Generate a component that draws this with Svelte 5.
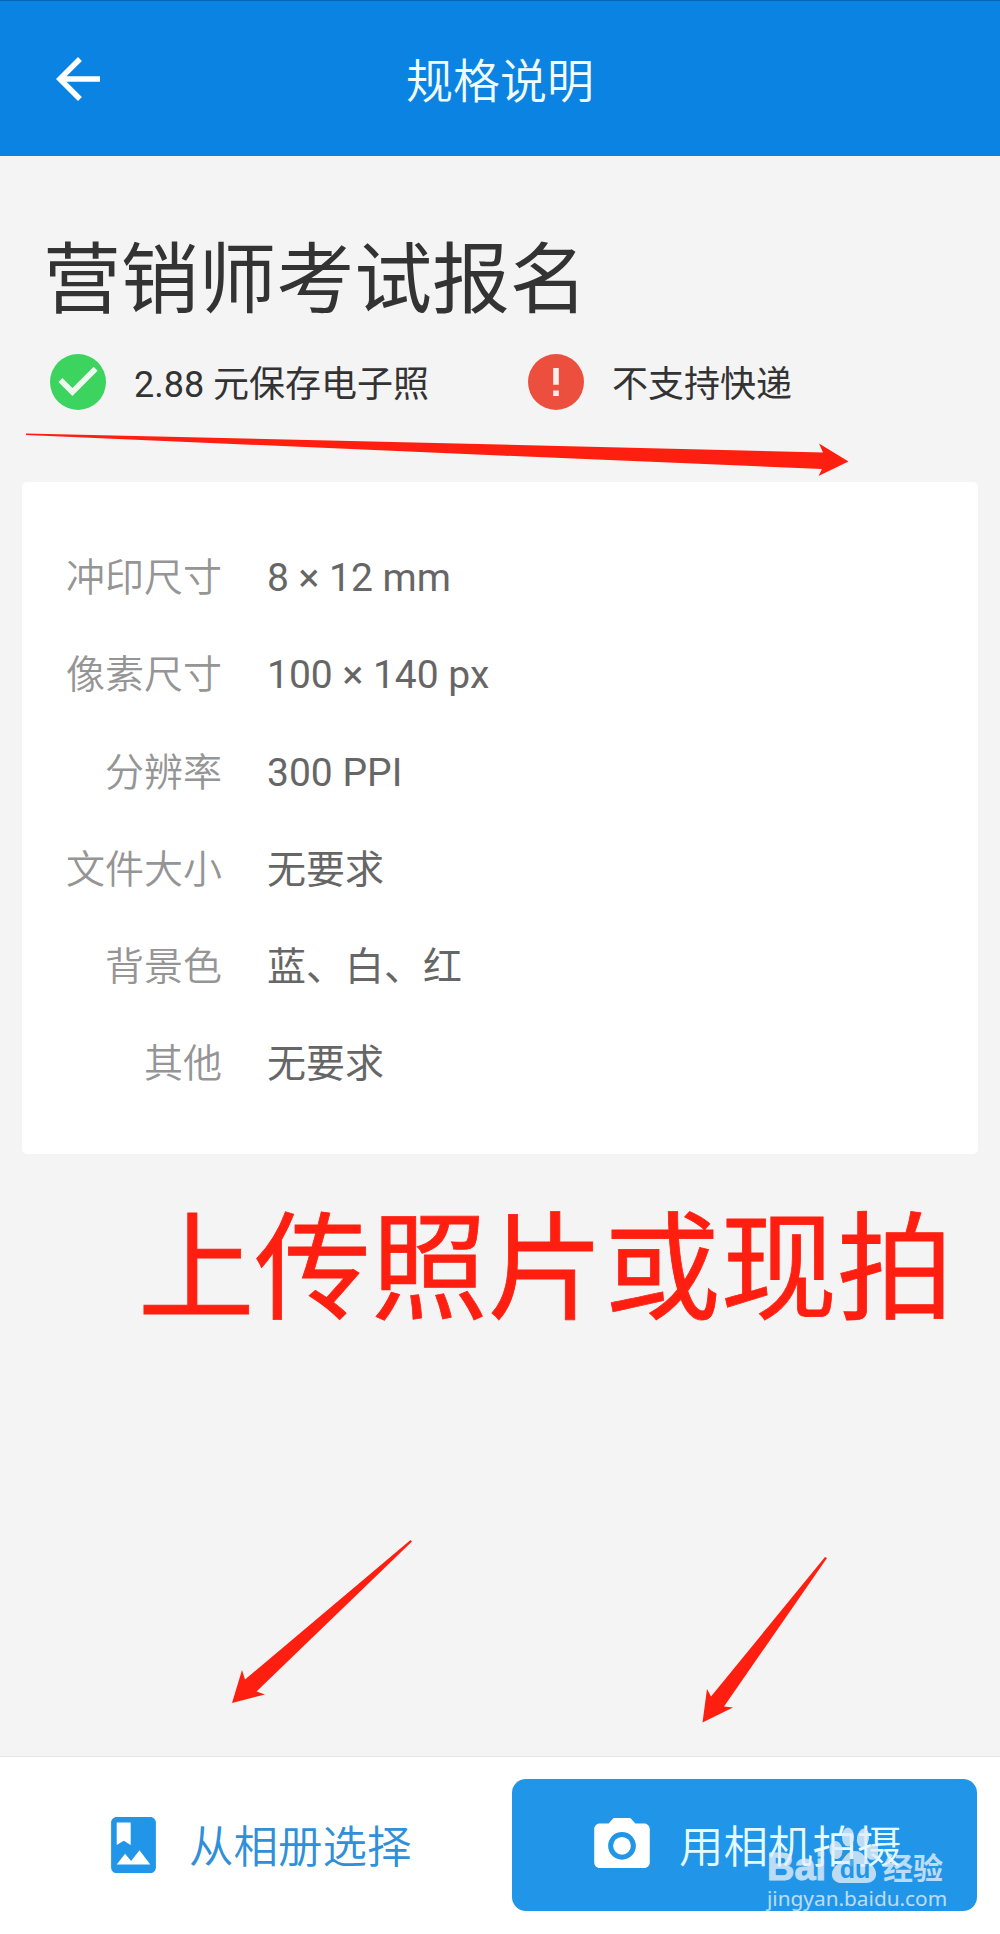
<script lang="ts">
  const title = "规格说明";
  const name = "营销师考试报名";

  const specs = [
    { label: "冲印尺寸", value: "8 × 12 mm" },
    { label: "像素尺寸", value: "100 × 140 px" },
    { label: "分辨率", value: "300 PPI" },
    { label: "文件大小", value: "无要求" },
    { label: "背景色", value: "蓝、白、红" },
    { label: "其他", value: "无要求" },
  ];
</script>

<main>
  <header>
    <button class="back" aria-label="返回">
      <svg viewBox="0 0 24 24">
        <path d="M20 11H7.83l5.59-5.59L12 4l-8 8 8 8 1.41-1.41L7.83 13H20v-2z" />
      </svg>
    </button>
    <span class="title">{title}</span>
  </header>

  <section class="intro">
    <h1>{name}</h1>
    <div class="status">
      <div class="item">
        <svg viewBox="2 2 20 20">
          <circle cx="12" cy="12" r="10" fill="#3dd35f" />
          <path d="M10 17l-5-5 1.41-1.41L10 14.17l7.59-7.59L19 8l-9 9z" fill="#eefaf0" />
        </svg>
        <span>2.88 元保存电子照</span>
      </div>
      <div class="item">
        <svg viewBox="2 2 20 20">
          <circle cx="12" cy="12" r="10" fill="#ed4f3f" />
          <path d="M11 7h2v6h-2zM11 15h2v2h-2z" fill="#fdeeec" />
        </svg>
        <span>不支持快递</span>
      </div>
    </div>
  </section>

  <dl class="card">
    {#each specs as spec}
      <div class="row">
        <dt>{spec.label}</dt>
        <dd>{spec.value}</dd>
      </div>
    {/each}
  </dl>

  <p class="note">上传照片或现拍</p>

  <footer>
    <button class="album">
      <svg class="album-icon" viewBox="4 2 16 20">
        <path
          d="M18 2H6c-1.1 0-2 .9-2 2v16c0 1.1.9 2 2 2h12c1.1 0 2-.9 2-2V4c0-1.1-.9-2-2-2zM6 4h5v8l-2.5-1.5L6 12V4zM6 19l3-3.86 2.14 2.58 3-3.86L18 19H6z"
        />
      </svg>
      <span>从相册选择</span>
    </button>
    <button class="camera">
      <svg class="camera-icon" viewBox="2 2 20 18">
        <circle cx="12" cy="12" r="3.2" />
        <path
          d="M9 2L7.17 4H4c-1.1 0-2 .9-2 2v12c0 1.1.9 2 2 2h16c1.1 0 2-.9 2-2V6c0-1.1-.9-2-2-2h-3.17L15 2H9zm3 15c-2.76 0-5-2.24-5-5s2.24-5 5-5 5 2.24 5 5-2.24 5-5 5z"
        />
      </svg>
      <span>用相机拍摄</span>
    </button>
  </footer>

  <!-- Hand drawn arrows, over the whole page. -->
  <svg class="marks" viewBox="0 0 1000 1934">
    <path d="M26 433.5L500 444.500 823 452.500 819 443.500 848.500 461.500 818.500 476 822 469 500 455.500 26 435z" />
    <path d="M410.500 1540L412 1541.500 256.500 1691.500 265 1694.500 232 1703 242 1670 245 1679.500z" />
    <path d="M825 1557L827 1558 724 1706.500 733 1707.500 702.500 1722.500 707 1689 711 1696.500z" />
  </svg>

  <div class="watermark">
    <div class="brand">
      <span class="bai">Bai</span>
      <svg viewBox="0 0 50 57">
        <ellipse cx="8" cy="23" rx="6.500" ry="9" transform="rotate(-8 8 23)" />
        <ellipse cx="20" cy="10" rx="6" ry="9.500" />
        <ellipse cx="35" cy="11" rx="6" ry="9.500" transform="rotate(10 35 11)" />
        <ellipse cx="45" cy="25" rx="7" ry="8" transform="rotate(25 45 25)" />
        <path d="M27 24C18 24 18 31 10 37C0 44 3 56 14 56H38C49 56 51 45 44 38C36 31 36 24 27 24z" />
        <text x="27" y="51" text-anchor="middle">du</text>
      </svg>
      <span class="exp">经验</span>
    </div>
    <span class="url">jingyan.baidu.com</span>
  </div>
</main>

<style>
  :global(body) {
    background-color: #f4f4f4;
  }

  main {
    position: relative;
    box-sizing: border-box;
    width: 1000px;
    height: 1934px;
    overflow: hidden;

    display: flex;
    flex-direction: column;

    font-family: Roboto, "Noto Sans CJK SC", sans-serif;
    background-color: #f4f4f4;
  }

  button {
    border: 0;
    padding: 0;
    font: inherit;
    background: none;
  }

  svg {
    display: block;
    flex: none;
  }

  header {
    box-sizing: border-box;
    height: 156px;
    padding: 0 45px;

    display: grid;
    grid-template-columns: 66px 1fr 66px;
    align-items: center;

    color: #f0fcff;
    background-color: #0b83e3;
    border-top: 1px solid #0765b4;
  }

  .back svg {
    width: 66px;
    height: 66px;
    fill: #fff;
  }

  .title {
    font-size: 47px;
    font-weight: 350;
    line-height: 60px;
    text-align: center;
    padding-top: 6px;
  }

  .intro {
    height: 326px;
    padding-left: 43px;
    color: #333;
  }

  h1 {
    margin: 0;
    padding-top: 73px;

    font-size: 77.8px;
    font-weight: 400;
    line-height: 104px;
  }

  .status {
    display: grid;
    grid-template-columns: 478px 1fr;
    padding: 21px 0 0 7px;
  }

  .item {
    display: flex;
    align-items: center;
    gap: 28px;

    font-size: 36px;
    line-height: 50px;
  }

  .item svg {
    width: 56px;
    height: 56px;
  }

  .item span {
    padding-top: 5px;
  }

  .card {
    box-sizing: border-box;
    height: 672px;
    margin: 0 22px;
    padding: 48px 44px;

    border-radius: 5px;
    background-color: #fff;
  }

  .row {
    display: grid;
    grid-template-columns: 156px 1fr;
    column-gap: 45px;

    font-size: 39px;
    line-height: 97.3px;
  }

  dt {
    text-align: right;
    font-weight: 350;
    color: #959595;
  }

  dd {
    margin: 0;
    color: #666;
  }

  .note {
    margin: 0;
    padding: 31px 0 0 138px;

    font-size: 116.5px;
    line-height: 170px;
    color: #ff1f10;
    -webkit-text-stroke: 0.8px #ff1f10;
  }

  footer {
    box-sizing: border-box;
    height: 178px;
    margin-top: auto;
    padding: 22px 23px 23px 22px;

    display: grid;
    grid-template-columns: 465px 465px;
    column-gap: 25px;

    border-top: 1px solid #e4e4e4;
    background-color: #fff;
  }

  footer button {
    display: flex;
    align-items: center;
    font-size: 44.5px;
    font-weight: 350;
  }

  footer span {
    padding-bottom: 4px;
  }

  .album {
    padding-left: 89px;
    gap: 33px;
    color: #2f8fd8;
  }

  .album-icon {
    width: 45px;
    height: 56px;
    fill: #2196e9;
  }

  .camera {
    padding-left: 82px;
    gap: 29px;
    border-radius: 14px;
    color: #e6fbff;
    background-color: #2196e9;
  }

  .camera-icon {
    width: 56px;
    height: 50px;
    margin-bottom: 5px;
    fill: #fff;
  }

  .marks {
    position: absolute;
    top: 0;
    left: 0;
    width: 1000px;
    height: 1934px;
    fill: #ff1f10;
    pointer-events: none;
  }

  .watermark {
    position: absolute;
    left: 767px;
    top: 1827px;
    color: #e3eef8;
    opacity: 0.8;
  }

  .brand {
    display: flex;
    align-items: flex-end;
    height: 57px;
  }

  .brand svg {
    width: 50px;
    height: 57px;
    margin-right: 5px;
    fill: #e3eef8;
  }

  .brand text {
    font-family: "Liberation Sans", sans-serif;
    font-size: 25px;
    font-weight: 700;
    fill: #2196e9;
  }

  .bai {
    width: 61px;
    font-family: "Liberation Sans", sans-serif;
    font-size: 38px;
    font-weight: 700;
    line-height: 34px;
    -webkit-text-stroke: 1px #e3eef8;
  }

  .exp {
    font-size: 30px;
    font-weight: 700;
    line-height: 30px;
  }

  .url {
    display: block;
    font-family: "Noto Sans", sans-serif;
    font-size: 20.8px;
    line-height: 28px;
  }
</style>
